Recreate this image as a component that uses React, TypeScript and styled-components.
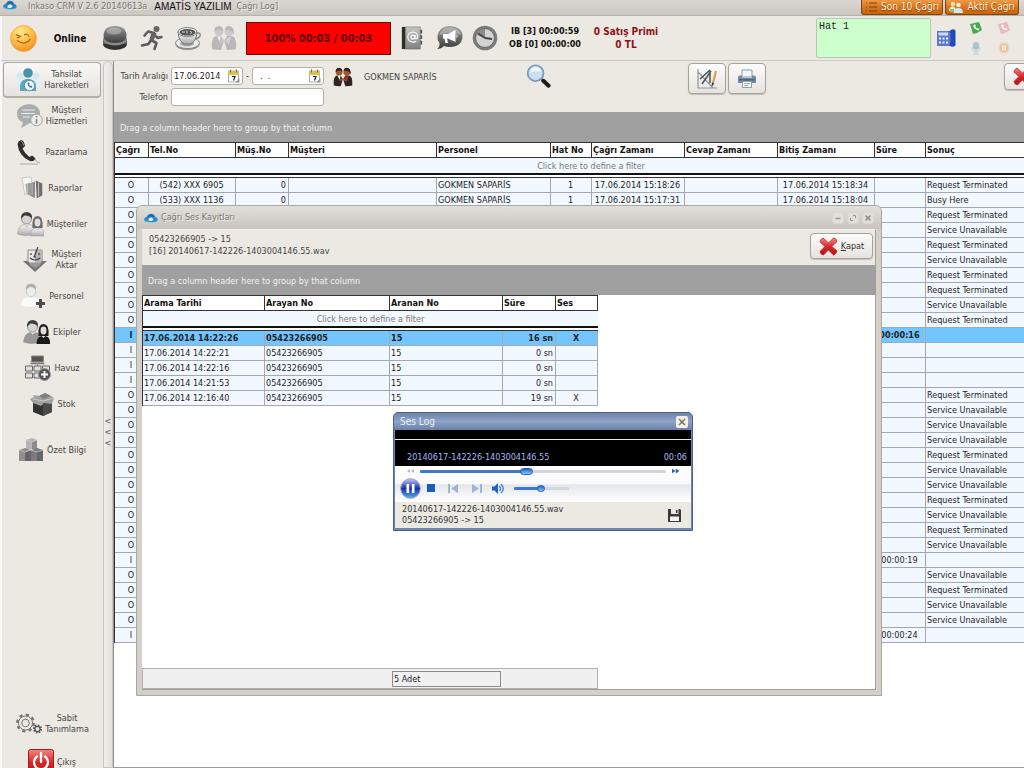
import React from "react";
import styled, { createGlobalStyle, css } from "styled-components";

const Global = createGlobalStyle`
  * { box-sizing: border-box; }
  html, body { margin: 0; padding: 0; }
  body, button, input, table {
    font-family: "DejaVu Sans Condensed", "DejaVu Sans", "Noto Sans", sans-serif;
    font-size: 9px;
    color: #222;
  }
  button, input, textarea { margin: 0; padding: 0; border: 0; background: none; outline: none; }
  svg { display: block; flex: none; }
`;

/* ---------- drawings ---------- */

const HiddenSvg = styled.svg`
  position: absolute;
`;
const Defs = () => (
  <HiddenSvg width="0" height="0" aria-hidden="true">
    <defs>
      <linearGradient id="gd" x1="0" y1="0" x2="0" y2="1">
        <stop offset="0" stopColor="#9a9a9a" />
        <stop offset="1" stopColor="#3c3c3c" />
      </linearGradient>
      <linearGradient id="gl" x1="0" y1="0" x2="0" y2="1">
        <stop offset="0" stopColor="#f6f6f6" />
        <stop offset="1" stopColor="#adadad" />
      </linearGradient>
      <linearGradient id="gm" x1="0" y1="0" x2="0" y2="1">
        <stop offset="0" stopColor="#c4c4c4" />
        <stop offset="1" stopColor="#808080" />
      </linearGradient>
      <radialGradient id="gs" cx="0.4" cy="0.25" r="0.8">
        <stop offset="0" stopColor="#ffe88a" />
        <stop offset="0.5" stopColor="#ffc04a" />
        <stop offset="1" stopColor="#f58a22" />
      </radialGradient>
      <linearGradient id="gr" x1="0" y1="0" x2="0" y2="1">
        <stop offset="0" stopColor="#f08a80" />
        <stop offset="0.5" stopColor="#d8292b" />
        <stop offset="1" stopColor="#b40f18" />
      </linearGradient>
      <linearGradient id="gb" x1="0" y1="0" x2="0" y2="1">
        <stop offset="0" stopColor="#c3cbf5" />
        <stop offset="0.5" stopColor="#1b2fae" />
        <stop offset="1" stopColor="#4fb2ff" />
      </linearGradient>
    </defs>
  </HiddenSvg>
);

type IconProps = { w?: number; h?: number; children: React.ReactNode; box?: string };
const Ico = ({ w = 26, h = 26, box = "0 0 26 26", children }: IconProps) => (
  <svg width={w} height={h} viewBox={box} aria-hidden="true">{children}</svg>
);

const CloudLogo = () => (
  <Ico w={14} h={10} box="0 0 14 10">
    <path d="M3 9Q0 8.500 .3 6Q1 3.800 3 3.800Q4 .5 7.500 .8Q10.500 1 11.200 4Q13.800 4.500 13.700 6.800Q13.200 9 11 9Z" fill="#2a86c6" />
    <path d="M3.500 4Q5 1 8 1.800Q10 2.500 10.500 4Q7 2.500 3.500 4Z" fill="#1a5f9b" />
    <path d="M4.300 7.500Q4.500 4.600 7.500 4.500Q9.300 5 9.500 7Q7 8.500 4.300 7.500Z" fill="#e9f4fb" />
    <path d="M1 7Q3 9 7 9Q11 9.400 13 7.500Q12 9.800 7 9.800Q2 9.800 1 7Z" fill="#5fd0e8" />
  </Ico>
);
const Smiley = () => (
  <Ico w={27} h={27}>
    <circle cx="13" cy="13" r="12.500" fill="url(#gs)" stroke="#f0a030" strokeWidth=".6" />
    <path d="M6 9.500L10 11L7 12.500M14 9.500Q17 7.500 18 11M7 15Q14 20.500 19.500 13.500" fill="none" stroke="#b5681a" strokeWidth="1.200" strokeLinecap="round" />
  </Ico>
);
const Buzzer = () => (
  <Ico>
    <ellipse cx="13" cy="19" rx="12" ry="6" fill="#333" />
    <path d="M1 14H25V19H1Z" fill="#555" />
    <ellipse cx="13" cy="14.500" rx="12" ry="6" fill="#8a8a8a" />
    <path d="M1.500 11Q1.500 1 13 1T24.500 11Q24 18 13 18T1.500 11Z" fill="url(#gd)" />
    <ellipse cx="12" cy="6" rx="7.500" ry="3.500" fill="#c5c5c5" opacity=".5" />
  </Ico>
);
const Runner = () => (
  <Ico>
    <circle cx="17.500" cy="4" r="3" fill="#666" />
    <path d="M15 8L9 6.500L5.500 10.500M15 8L12 15L17.500 18L15.500 24M12 15L9.500 19L3 20.500M15 9L18.500 13L22.500 12" fill="none" stroke="#5c5c5c" strokeWidth="2.600" strokeLinecap="round" strokeLinejoin="round" />
    <path d="M12.500 7.500L17.500 8L14.500 16L10.500 14.500Z" fill="#666" />
  </Ico>
);
const Coffee = () => (
  <Ico>
    <ellipse cx="12.500" cy="19.500" rx="12" ry="5.500" fill="#8f8f8f" />
    <ellipse cx="12.500" cy="18" rx="12" ry="5.500" fill="#ececec" stroke="#777" strokeWidth=".8" />
    <ellipse cx="12" cy="18.500" rx="7" ry="3" fill="#a5a5a5" />
    <path d="M3 7Q3.500 17 10 19H15Q21.500 17 22 7Z" fill="url(#gl)" stroke="#666" strokeWidth=".8" />
    <path d="M21.500 8Q26 7.500 25 11Q23.500 14 20 13.500" fill="none" stroke="#888" strokeWidth="1.500" />
    <ellipse cx="12.500" cy="7" rx="9.500" ry="4.500" fill="#eee" stroke="#666" strokeWidth=".8" />
    <ellipse cx="12.500" cy="7.300" rx="7.800" ry="3.300" fill="#555" />
    <path d="M7 7H10M12 5.500V8.500M15 6Q18 7 15.500 9" stroke="#ddd" fill="none" />
  </Ico>
);
const Talkers = ({ dark }: { dark?: boolean }) => {
  const a = dark ? "#2d2424" : "#b8b8b8";
  const b = dark ? "#a8542a" : "#cacaca";
  const c = dark ? "#c2282c" : "#d5d5d5";
  return (
    <Ico w={dark ? 22 : 26} h={dark ? 20 : 26}>
      <circle cx="8" cy="6.500" r="4.500" fill={b} />
      <path d="M3.500 7Q3 1 8 1Q12.500 1.500 12 6Q9 4 7 4.500Q5 5 3.500 7Z" fill={a} />
      <circle cx="18" cy="6.500" r="4.500" fill={b} />
      <path d="M14 5Q14 1 18 1Q23.500 1.500 23 10Q21 4 14 5Z" fill={a} />
      <path d="M1 24Q0 12 5 11H10Q12 14 12.500 17L10 25Q4 25 1 24ZM25 24Q26 12 21 11H16Q14 14 13.500 17L16 25Q22 25 25 24Z" fill={a} />
      <path d="M6 11.500L8.500 17L10 11Z" fill={dark ? "#fff" : "#e8e8e8"} />
      <path d="M15.500 13L17.500 20L20.500 11.500Z" fill={c} />
      <path d="M9 18Q13 13 17 18" stroke={b} strokeWidth="2" fill="none" />
    </Ico>
  );
};
const AddressBook = () => (
  <Ico w={24}>
    <path d="M2 1H6V25H2Z" fill="#2c2c2c" /><path d="M6 1H22V25H6Z" fill="url(#gm)" stroke="#6c6c6c" strokeWidth=".6" />
    <path d="M22 4H24V8H22ZM22 10H24V14H22ZM22 16H24V20H22Z" fill="#555" />
    <circle cx="14" cy="12" r="2.200" fill="none" stroke="#fff" strokeWidth="1.300" />
    <path d="M16.200 9.800V13.200Q17.500 15 18.800 13.200Q20 7 14 6.500Q8.500 7 8.500 12T14 17.500Q16 17.500 17.500 16.500" fill="none" stroke="#fff" strokeWidth="1.200" />
  </Ico>
);
const Megaphone = () => (
  <Ico w={28} box="0 0 26 26">
    <path d="M13 1Q25.500 2 25.500 11.500Q25 21.500 13 22Q9 22 7 21Q4 24.500 0 24Q3 22 2.500 18Q0 15 .5 11Q2 1.500 13 1Z" fill="url(#gd)" />
    <path d="M13 2Q23.500 3 24 10Q13 6 2 10.500Q4 2.500 13 2Z" fill="#bbb" opacity=".7" />
    <path d="M6 9H11L18.500 5V17L11 13.500H10L11 18H8.500L7.500 13.500H6Z" fill="#fff" /><path d="M19.500 9Q21.500 11 19.500 13.500Z" fill="#fff" />
  </Ico>
);
const Clock = () => (
  <Ico>
    <circle cx="13" cy="13" r="12.300" fill="#7c7c7c" /><circle cx="13" cy="13" r="9.500" fill="#d2d2d2" stroke="#666" />
    <path d="M13 13L4.500 9.500Q7 4 13 4Z" fill="#8b8b8b" /><path d="M13 13L6 8.500M13 13L20 14" stroke="#444" strokeWidth="1.800" />
  </Ico>
);
const Phone = () => (
  <Ico w={20} h={20} box="0 0 20 20">
    <path d="M1 3H15V18H1Z" fill="#5b7ad0" /><path d="M2.500 4.500H12V7.500H2.500Z" fill="#cfdcfb" />
    <path d="M3 9.500H5V11.500H3ZM6.500 9.500H8.500V11.500H6.500ZM10 9.500H12V11.500H10ZM3 13.500H5V15.500H3ZM6.500 13.500H8.500V15.500H6.500ZM10 13.500H12V15.500H10Z" fill="#e6edff" />
    <path d="M13.500 3Q17 0 19.500 2.500V17.500Q16.500 20 13.500 17.500Q15 15 14.500 10Q15 6 13.500 3Z" fill="#2648b4" />
  </Ico>
);
const CallGlyph = ({ color }: { color: string }) => (
  <Ico w={14} h={14} box="0 0 14 14">
    <path d="M1 3L10 1L13 9L8 12L4 13Z" fill={color} />
    <path d="M4 4.500Q5 8.500 9.500 9.500L10.500 8L8.500 7L8 7.700Q6.500 7 6.300 5.600L7 5L6 3.200Z" fill="#fff" />
  </Ico>
);
const Mic = () => (
  <Ico w={14} h={14} box="0 0 14 14">
    <rect x="4" y="1" width="6" height="8" rx="3" fill="#a9c3cf" />
    <path d="M3 6Q3 10.500 7 10.500T11 6M7 10.500V13M4 13H10" stroke="#b8ccd4" fill="none" />
  </Ico>
);
const HoldDot = () => (
  <Ico w={14} h={14} box="0 0 14 14">
    <circle cx="7" cy="7" r="6.500" fill="#f2dccb" /><circle cx="7" cy="7" r="4.500" fill="#ecc09c" />
    <path d="M5.700 4.500V9.500M8.300 4.500V9.500" stroke="#fff" strokeWidth="1.400" />
  </Ico>
);
const ListGlyph = () => (
  <Ico w={12} h={12} box="0 0 12 12"><path d="M4 2H12M4 6H12M4 10H12M1 2H2M1 6H2M1 10H2" stroke="#7c4310" /></Ico>
);
const UsersGlyph = () => (
  <Ico w={14} h={12} box="0 0 14 12">
    <circle cx="4" cy="3" r="2.300" fill="#f4dca0" /><path d="M0 9Q1 5 4 5.500Q7 6 7 10H0Z" fill="#f0e9e2" />
    <circle cx="9.500" cy="4" r="2.300" fill="#fff0d8" /><path d="M4.500 12Q5 7 9.500 7T14 12Z" fill="#cfe6ee" />
    <path d="M1 8H5V11H1Z" fill="#8fbf70" />
  </Ico>
);
const CalendarGlyph = () => (
  <Ico w={14} h={14} box="0 0 14 14">
    <rect x="1.500" y="2" width="10" height="11" fill="#fff" stroke="#999" strokeWidth=".8" />
    <path d="M1 2H12V6H1Z" fill="#dfbd4e" /><path d="M3.500 .5V3.500M9.500 .5V3.500" stroke="#7d6a28" />
    <path d="M5 7.500H8L6.500 11.500" fill="none" stroke="#222" strokeWidth="1.200" /><path d="M12.500 8.500V13.500H8.500Z" fill="#999" />
  </Ico>
);
const Magnifier = () => (
  <Ico w={25} h={25}>
    <path d="M15.500 15.500L19 18" stroke="#888" strokeWidth="2.500" />
    <path d="M18 17.500L23.500 22.500" stroke="#1b1b1b" strokeWidth="4.200" strokeLinecap="round" />
    <circle cx="10" cy="9.500" r="8.200" fill="#c9dff5" stroke="#7f98b5" strokeWidth="1.800" />
    <path d="M4 9Q5 3.500 11 3.500Q15 5 15.500 8Q10 7 4 9Z" fill="#f4faff" />
  </Ico>
);
const DesignGlyph = () => (
  <Ico w={22} h={22} box="0 0 22 22">
    <path d="M2 1V20H21M2 4L17 20" fill="none" stroke="#8d979f" strokeWidth="1.200" />
    <path d="M4 11L14 2M6 16L15 3M14 3V15" stroke="#4a5259" strokeWidth="1.500" fill="none" />
    <path d="M20 3L17 15" stroke="#dca04a" strokeWidth="2.200" /><path d="M16 14.500L15.500 19L18.200 15.500Z" fill="#333" />
  </Ico>
);
const PrinterGlyph = () => (
  <Ico w={20} h={20} box="0 0 20 20">
    <path d="M5 1H15V8H5Z" fill="#f4f8fb" stroke="#8a9caa" />
    <path d="M1 8.500Q1 6.500 3 6.500H5V9H15V6.500H17Q19 6.500 19 8.500V14H1Z" fill="#6d8ca3" /><path d="M2 10H18V11.500H2Z" fill="#45667d" />
    <path d="M5.500 12.500H14.500V18.500H5.500Z" fill="#fff" stroke="#8a9caa" /><path d="M7 14.500H13M7 16.500H11" stroke="#aaa" />
  </Ico>
);
const RedCross = () => (
  <Ico w={19} h={19} box="0 0 19 19">
    <path d="M4 1L9.500 6L14.500 1Q17 1 18 4.500L12.800 9.500L18 14Q17 17.500 14.500 18L9.300 13L4.500 18Q1.500 17.500 1 14.500L6 9.500L1 5Q1.500 2 4 1Z" fill="url(#gr)" stroke="#b32a2e" strokeWidth=".8" />
  </Ico>
);
const Care = () => (
  <Ico w={26}>
    <circle cx="5" cy="9" r="3.500" fill="#d3e9f2" /><circle cx="21" cy="9" r="3.500" fill="#d3e9f2" /><path d="M0 20Q1 13 6 13H20Q25 13 26 20Z" fill="#deeef5" />
    <circle cx="13" cy="6" r="4.800" fill="#4993ae" /><path d="M5 24Q4 13 11 12H15Q22 13 21 24Z" fill="#5ba6c0" />
    <circle cx="14.500" cy="18.500" r="5.200" fill="#f5fbfd" stroke="#4c90aa" /><path d="M12.500 16Q12.500 20 16.500 21L17.500 19.500L16 18.500L15.500 19Q14.500 18.500 14.200 17.500L14.800 16.800L13.800 15.500Z" fill="#3b7d97" />
  </Ico>
);
const Speech = () => (
  <Ico>
    <path d="M12 1Q23 2 23 10.500Q22 19 13 20L4 25L6 19.500Q0 17 0 10.500Q.5 2 12 1Z" fill="#a9adad" />
    <path d="M5 7H18M4 10.500H18M6 14H13" stroke="#e9ebeb" strokeWidth="1.200" />
    <circle cx="19.500" cy="17" r="5.800" fill="#ececec" stroke="#9ea4a4" /><path d="M19.500 16V20.500M19.500 13V14.500" stroke="#888" strokeWidth="1.700" />
  </Ico>
);
const Handset = () => (
  <Ico>
    <path d="M5 1Q8 1 9 7L6.500 9.500Q9 15 13.500 18L16 16.500Q19 18 19.500 20Q17 23.500 13 21.500Q3 17 1.500 5Q2 2 5 1Z" fill="#2f2f2f" />
    <path d="M5 2Q7 3 7.500 6.500" stroke="#999" fill="none" /><path d="M4 25H22M19 20Q20 23 24 24" stroke="#aaa" fill="none" />
  </Ico>
);
const Reports = () => (
  <Ico w={24}>
    <path d="M1 2L11 1L13 19L4 20Z" fill="#f4f4f4" stroke="#c5c5c5" /><path d="M5 9L10 7V21L6 19Z" fill="#9b9b9b" />
    <path d="M10 8L15 6V24L10 21Z" fill="#848484" /><path d="M16 5L23 8V21L17 24Z" fill="#6d6d6d" /><path d="M12 8V21M19 7V22M7 9V19" stroke="#ccc" />
  </Ico>
);
const Couple = ({ dark }: { dark?: boolean }) => (
  <Ico w={27}>
    <circle cx="9" cy="8" r="5" fill="#d5d5d5" stroke="#777" strokeWidth=".7" /><path d="M3.500 8Q3 1 9.500 1Q15.500 2 14.500 8Q13 4.500 7 4.500Q5 6 3.500 8Z" fill="#3c3c3c" />
    <path d="M0 23Q1 14 7 13.500L9 16L12 13.500Q17 14 17 23Q8 26 0 23Z" fill={dark ? "#989898" : "url(#gl)"} stroke="#888" strokeWidth=".5" />
    <path d="M15 17Q14 5 20 5T25 17Z" fill={dark ? "#1f1f1f" : "#6a6a6a"} /><ellipse cx="20" cy="11.500" rx="3" ry="4" fill="#ddd" />
    <path d="M13 25Q13 18 18 17L20 19L22 17Q27 18 26.500 25Z" fill={dark ? "#191919" : "url(#gl)"} stroke={dark ? "none" : "#999"} strokeWidth=".5" />
  </Ico>
);
const Transfer = () => (
  <Ico>
    <path d="M6 3H20V16H6Z" fill="#e8e8e8" stroke="#888" /><path d="M13 3H20V16H13Z" fill="#b5b5b5" />
    <path d="M1 14H6L8 17H18L20 14H25L13 25Z" fill="#777" /><path d="M8 16H18V18L13 21L8 18Z" fill="#999" />
    <path d="M9 6V8M17 6V8M8 11Q13 15 18 11M16 0L12 10H14" stroke="#333" fill="none" strokeWidth="1.100" />
  </Ico>
);
const PersonAdd = () => (
  <Ico>
    <path d="M0 23Q1 15 7 14L9 12H13L15 14Q21 15 20 23Q10 26 0 23Z" fill="#fafafa" stroke="#ddd" strokeWidth=".6" />
    <ellipse cx="11" cy="7.500" rx="4.800" ry="6.500" fill="#ededed" stroke="#bbb" strokeWidth=".7" /><path d="M6 7Q5 1 11 .7Q17 1 16 7Q14 4 11 4T6 7Z" fill="#aeaeae" />
    <path d="M20.500 16V25M16 20.500H25" stroke="#4b4b4b" strokeWidth="3" />
  </Ico>
);
const Pool = () => (
  <Ico w={27}>
    <path d="M7 1H19V7H7Z" fill="#555" stroke="#888" /><path d="M6 8.500H20" stroke="#777" strokeWidth="1.500" /><path d="M13 8V12" stroke="#999" fill="none" />
    <path d="M1 11H8V16H1ZM9.500 11H16.500V16H9.500ZM18 11H25V16H18ZM1 18H8V23H1ZM9.500 18H16.500V23H9.500Z" fill="#dedede" stroke="#666" />
    <circle cx="20" cy="19.500" r="6" fill="#555" stroke="#999" /><path d="M20 16V23M16.500 19.500H23.500" stroke="#fff" strokeWidth="2" />
  </Ico>
);
const OpenBox = () => (
  <Ico>
    <path d="M4 11H23V21L14 25L4 21Z" fill="#333" /><path d="M14 13L23 11V21L14 25Z" fill="#4a4a4a" />
    <path d="M4 4L10 5L16 2L22 5L25 7L23 13L15 12L12 15L4 12L1 8L5 6Z" fill="#a0a0a0" /><path d="M10 5L16 2L22 5L15 8Z" fill="#7f7f7f" /><path d="M4 8L14 10L25 7" stroke="#c8c8c8" fill="none" />
  </Ico>
);
const Cubes = () => (
  <Ico>
    <path d="M8 3L14 1L19 3V12H8Z" fill="#b4b4b4" /><path d="M14 5L19 3V12H14Z" fill="#8b8b8b" />
    <path d="M1 13L7 11L13 13V24H1Z" fill="#909090" /><path d="M13 13L19 11L25 13V24H13Z" fill="#7c7c7c" />
    <path d="M7 15L13 13V24H7ZM19 15L25 13V24H19Z" fill="#666" /><path d="M1 13L7 15L13 13L19 15L25 13M8 3L14 5L19 3" stroke="#ccc" fill="none" strokeWidth=".7" />
  </Ico>
);
const Gears = () => (
  <Ico w={27}>
    <circle cx="10" cy="12" r="8" fill="none" stroke="#777" strokeWidth="3" strokeDasharray="3.140 3.140" />
    <circle cx="10" cy="12" r="7" fill="#ece9e3" stroke="#777" /><circle cx="10" cy="12" r="3.800" fill="none" stroke="#777" />
    <circle cx="22" cy="18" r="3.600" fill="none" stroke="#555" strokeWidth="2" strokeDasharray="1.400 1.400" /><circle cx="22" cy="18" r="2.600" fill="none" stroke="#555" strokeWidth="1.300" />
  </Ico>
);
const Power = () => (
  <Ico>
    <rect x=".5" y=".5" width="25" height="25" rx="2" fill="url(#gr)" stroke="#a51a20" />
    <path d="M9 7.500A7 7 0 1 0 17 7.500M13 4V13" stroke="#fff" strokeWidth="2.300" fill="none" strokeLinecap="round" />
  </Ico>
);
const Floppy = () => (
  <Ico w={15} h={15} box="0 0 15 15">
    <path d="M1 1H13L14 2V14H1Z" fill="#3a3a3a" /><path d="M4 1H11.500V6H4Z" fill="#e9e9e6" /><path d="M9 2H10.500V5H9Z" fill="#333" /><path d="M3 8.500H12V13H3Z" fill="#f5f5f2" />
  </Ico>
);

/* ---------- page frame ---------- */

const Screen = styled.div`
  position: relative;
  height: 100vh;
  display: flex;
  flex-direction: column;
  overflow: hidden;
  background: #ece9e3;
`;
const TitleBar = styled.header`
  height: 16px;
  flex: none;
  display: flex;
  align-items: flex-start;
  padding: 0 5px 0 3px;
  background: linear-gradient(#dbd7d2, #cbc6bf);
  border-bottom: 1px solid #b5b1aa;
`;
const TitleText = styled.span`
  color: #77736e;
  font-size: 9px;
  line-height: 13px;
  text-shadow: 1px 1px 0 #f2f0ed;
  white-space: nowrap;
`;
const Company = styled.strong`
  margin: 0 5px 0 7px;
  font: 10px/13px "Liberation Sans", Arial, sans-serif;
  color: #111;
`;
const TitleGap = styled.span<{ $w?: number }>`
  ${(p) => (p.$w ? `width: ${p.$w}px;` : "flex: 1;")}
`;
const OrangeButton = styled.button<{ $w: number }>`
  width: ${(p) => p.$w}px;
  height: 15px;
  margin-left: 2px;
  display: flex;
  align-items: center;
  justify-content: center;
  gap: 4px;
  background: linear-gradient(#ee9a44, #d4711a 60%, #c96510);
  border: 1px solid #7c4512;
  border-top: 0;
  border-radius: 0 0 3px 3px;
  color: #fff3df;
  font-size: 10px;
  line-height: 12px;
  text-shadow: 0 1px 1px #7a3c08;
  white-space: nowrap;
`;

const Toolbar = styled.div`
  height: 45px;
  flex: none;
  display: flex;
  align-items: center;
  border-left: 2px solid #fbfaf8;
  border-bottom: 1px solid #cdc9c2;
  padding: 0 12px 0 0;
`;
const Cell = styled.div<{ $w: number }>`
  width: ${(p) => p.$w}px;
  flex: none;
  display: flex;
  justify-content: center;
`;
const ToolButton = styled.button<{ $w: number }>`
  width: ${(p) => p.$w}px;
  flex: none;
  display: flex;
  justify-content: center;
`;
const Online = styled.strong`
  font-size: 10px;
  color: #111;
`;
const Counter = styled.div`
  width: 145px;
  height: 33px;
  flex: none;
  margin-left: 4px;
  display: flex;
  align-items: center;
  justify-content: center;
  background: #fd0000;
  border: 1px solid #5c1010;
  color: #5a0000;
  font-size: 11px;
  font-weight: bold;
`;
const Stats = styled.div<{ $w: number; $red?: boolean }>`
  width: ${(p) => p.$w}px;
  flex: none;
  text-align: center;
  font-weight: bold;
  font-size: ${(p) => (p.$red ? 10 : 9)}px;
  line-height: 13px;
  white-space: nowrap;
  color: ${(p) => (p.$red ? "#8e1218" : "#111")};
`;
const Line = styled.textarea`
  width: 115px;
  height: 40px;
  flex: none;
  margin-left: auto;
  padding: 2px;
  resize: none;
  background: #ccffcc;
  border: 1px solid #b5c8b3;
  border-radius: 2px;
  font: 10px/12px "Liberation Mono", "Courier New", monospace;
  color: #222;
`;
const CallGrid = styled.div`
  display: grid;
  grid-template-columns: 28px 28px;
  grid-template-rows: 20px 20px;
  place-items: center;
  margin-left: 1px;
  margin-right: -6px;
`;

const Body = styled.div`
  flex: 1;
  min-height: 0;
  display: flex;
  border-left: 2px solid #fbfaf8;
`;
const Sidebar = styled.nav`
  width: 101px;
  flex: none;
  display: flex;
  flex-direction: column;
  padding: 1px 2px 0 1px;
  overflow: hidden;
`;
const NavItem = styled.button<{ $active?: boolean; $gap?: boolean; $push?: boolean }>`
  height: 36px;
  flex: none;
  display: flex;
  align-items: center;
  justify-content: center;
  gap: 3px;
  border: 1px solid transparent;
  border-radius: 4px;
  color: #46423e;
  font-size: 9px;
  line-height: 11px;
  text-align: center;
  white-space: pre-line;
  ${(p) => p.$gap && "margin-top: 10px;"}
  ${(p) => p.$push && "margin-top: auto;"}
  ${(p) => p.$active && css`
    background: linear-gradient(#f8f7f6, #e6e3de);
    border: 1px solid #aaa6a0;
    border-bottom: 2px solid #b2aea8;
  `}
  &:last-child { margin: 2px 0 -12px; }
`;
const Splitter = styled.button`
  width: 10px;
  flex: none;
  display: flex;
  flex-direction: column;
  align-items: center;
  justify-content: center;
  padding-top: 36px;
  background: linear-gradient(90deg, #f1efeb, #e2dfda);
  border: 1px solid #c9c5bf;
  border-radius: 5px 5px 0 0;
  color: #555;
  font-size: 9px;
  line-height: 11px;
`;
const Main = styled.main`
  flex: 1;
  min-width: 0;
  display: flex;
  flex-direction: column;
  background: #fff;
  border-left: 1px solid #8f8f8f;
  border-bottom: 1px solid #9c9c9c;
  overflow: hidden;
`;
const FilterBar = styled.form`
  height: 51px;
  flex: none;
  display: flex;
  align-items: flex-start;
  background: #ece9e3;
  padding-top: 2px;
`;
const Fields = styled.div`
  display: grid;
  grid-template-columns: 54px 153px;
  column-gap: 3px;
  row-gap: 3px;
  padding-top: 4px;
  align-items: center;
`;
const FieldLabel = styled.label`
  text-align: right;
  color: #444;
  white-space: nowrap;
`;
const DateRange = styled.div`
  display: flex;
  justify-content: space-between;
  align-items: center;
`;
const fieldBox = css`
  height: 18px;
  background: #fff;
  border: 1px solid #b3afa9;
  border-radius: 3px;
`;
const DateBox = styled.span`
  ${fieldBox}
  width: 72px;
  display: flex;
  align-items: center;
  padding: 0 2px;
`;
const DateInput = styled.input`
  width: 53px;
  white-space: pre;
`;
const TextInput = styled.input`
  ${fieldBox}
  width: 100%;
`;
const Agent = styled.div`
  width: 194px;
  height: 28px;
  flex: none;
  margin-left: 8px;
  display: flex;
  align-items: center;
  gap: 10px;
  color: #444;
`;
const FlatButton = styled.button`
  height: 26px;
  flex: none;
`;
const raised = css`
  background: linear-gradient(#fcfcfb, #e6e3df);
  border: 1px solid #a5a19b;
  border-radius: 4px;
  box-shadow: 0 1px 1px #c2beb7;
  display: flex;
  align-items: center;
  justify-content: center;
`;
const SquareButton = styled.button`
  ${raised}
  width: 38px;
  height: 31px;
  flex: none;
  margin-right: 2px;
`;
const ButtonPair = styled.div`
  display: flex;
  margin-left: 137px;
`;
const CloseButton = styled.button`
  ${raised}
  width: 40px;
  height: 27px;
  flex: none;
  margin-left: auto;
  margin-right: -20px;
  justify-content: flex-start;
  padding-left: 8px;
`;

/* ---------- grids ---------- */

const GroupBar = styled.div`
  height: 30px;
  flex: none;
  padding: 0 6px;
  background: #a0a0a0;
  color: #f1f1f1;
  line-height: 32px;
`;
const Grid = styled.table<{ $w: number; $fill?: boolean }>`
  width: ${(p) => p.$w}px;
  ${(p) => p.$fill && "min-width: 100%;"}
  table-layout: fixed;
  border-collapse: separate;
  border-spacing: 0;
  border-left: 1px solid #333;
  line-height: 14px;
`;
const Th = styled.th`
  height: 16px;
  padding: 0 2px 0 1px;
  text-align: left;
  font-weight: bold;
  color: #111;
  background: #fff;
  border: 1px solid #333;
  border-left: 0;
  white-space: nowrap;
  overflow: hidden;
`;
const FilterCell = styled.td`
  height: 15px;
  padding: 0;
  text-align: center;
  background: #f2f8ff;
  color: #777;
`;
const RuleCell = styled.td`
  height: 5px;
  padding: 0;
  line-height: 0;
  background: #fff;
  border-top: 2px solid #111;
  border-bottom: 1px solid #333;
`;
const Td = styled.td<{ $a?: "center" | "right" }>`
  height: 15px;
  padding: 0 2px 0 1px;
  text-align: ${(p) => p.$a || "left"};
  border-right: 1px solid #a3a9ae;
  border-bottom: 1px solid #a3a9ae;
  white-space: nowrap;
  overflow: hidden;
`;
const Row = styled.tr<{ $sel?: boolean }>`
  background: ${(p) => (p.$sel ? "#73c5fd" : "#f2f8ff")};
  font-weight: ${(p) => (p.$sel ? "bold" : "normal")};
`;

/* ---------- dialog ---------- */

const Dialog = styled.section`
  position: absolute;
  left: 136px;
  top: 205px;
  width: 746px;
  height: 491px;
  display: flex;
  flex-direction: column;
  padding: 0 5px 5px;
  background: #d3cfc9;
  border: 1px solid #aba79f;
  border-radius: 6px 6px 0 0;
`;
const DialogTitle = styled.header`
  height: 23px;
  flex: none;
  margin: 0 -5px;
  padding: 0 7px;
  display: flex;
  align-items: center;
  gap: 3px;
  border-radius: 5px 5px 0 0;
  background: linear-gradient(#e2dfdb, #c8c3bc);
`;
const WinButton = styled.button`
  width: 12px;
  height: 12px;
  display: grid;
  place-items: center;
  background: #e2dfda;
  border: 1px solid #d9d5cf;
  border-radius: 3px;
`;
const DialogBody = styled.div`
  flex: 1;
  min-height: 0;
  display: flex;
  flex-direction: column;
  background: #fff;
  border: 1px solid #a29f97;
  border-left: 0;
  border-top-color: #f4f2ee;
`;
const DialogHead = styled.div`
  height: 35px;
  flex: none;
  display: flex;
  justify-content: space-between;
  padding: 3px 2px 0 7px;
  background: #ece9e3;
  color: #444;
  line-height: 12px;
`;
const DialogInfo = styled.p`
  margin: 0;
  white-space: pre-line;
`;
const Kapat = styled.button`
  ${raised}
  width: 63px;
  height: 26px;
  gap: 3px;
  color: #333;
`;
const Summary = styled.footer`
  width: 456px;
  height: 21px;
  margin-top: auto;
  padding: 2px 0 0 249px;
  background: #f0f0f0;
  border: 1px solid #b0b0b0;
`;
const SummaryBox = styled.output`
  display: block;
  width: 109px;
  height: 16px;
  padding-left: 1px;
  border: 1px solid #8c8c8c;
  line-height: 14px;
`;

/* ---------- audio player ---------- */

const Player = styled.section`
  position: absolute;
  left: 393px;
  top: 412px;
  width: 300px;
  height: 119px;
  display: flex;
  flex-direction: column;
  padding: 0 1px 2px;
  background: #6f86ae;
  border: 1px solid #4c5f85;
  border-radius: 5px 5px 0 0;
`;
const PlayerTitle = styled.header`
  height: 17px;
  flex: none;
  margin: 0 -1px;
  padding: 0 4px 0 6px;
  display: flex;
  justify-content: space-between;
  align-items: center;
  border-radius: 4px 4px 0 0;
  background: linear-gradient(#6f84ab, #8fa3c6 50%, #6a80a8);
  color: #eef2fa;
  font-size: 10px;
`;
const PlayerClose = styled.button`
  width: 12px;
  height: 12px;
  display: grid;
  place-items: center;
  background: #f2f1e8;
  border-radius: 2px;
`;
const Display = styled.div`
  height: 36px;
  flex: none;
  display: flex;
  flex-direction: column;
  background: #000;
  color: #a9b3f5;
`;
const Scope = styled.div`
  height: 10px;
  border-bottom: 1px solid #e8e8e8;
`;
const Track = styled.div`
  flex: 1;
  display: flex;
  justify-content: space-between;
  padding: 11px 4px 0 12px;
  line-height: 13px;
`;
const Controls = styled.div`
  height: 36px;
  flex: none;
  background: linear-gradient(#fff 0, #fafafb 50%, #e4e6ea 52%, #fff);
`;
const SeekRow = styled.div`
  height: 10px;
  display: flex;
  align-items: center;
  justify-content: space-between;
  padding: 0 11px;
`;
const ButtonRow = styled.div`
  display: flex;
  align-items: center;
  height: 24px;
  padding-left: 4px;
`;
const IconButton = styled.button<{ $w: number }>`
  width: ${(p) => p.$w}px;
  display: grid;
  place-items: center;
`;
const Range = styled.input<{ $w: number; $thumb: number; $pct: number }>`
  appearance: none;
  width: ${(p) => p.$w}px;
  height: 8px;
  &::-webkit-slider-runnable-track {
    height: 3px;
    border-radius: 1px;
    background: linear-gradient(90deg, #3b79d2 ${(p) => p.$pct}%, #d3d6da ${(p) => p.$pct}%);
  }
  &::-webkit-slider-thumb {
    appearance: none;
    width: ${(p) => p.$thumb}px;
    height: 7px;
    margin-top: -2px;
    border: 1px solid #1f5cb8;
    border-radius: 4px;
    background: linear-gradient(#1b63ce, #8fc4ff);
  }
`;
const PlayerFoot = styled.footer`
  flex: 1;
  display: flex;
  align-items: center;
  justify-content: space-between;
  padding: 0 9px 0 7px;
  background: #ece9e3;
  color: #333;
  line-height: 11px;
  white-space: pre-line;
`;

/* ---------- data ---------- */

const navItems: { label: string; icon: React.ReactNode; active?: boolean; gap?: boolean; push?: boolean }[] = [
  { label: "Tahsilat\nHareketleri", icon: <Care />, active: true },
  { label: "Müşteri\nHizmetleri", icon: <Speech /> },
  { label: "Pazarlama", icon: <Handset /> },
  { label: "Raporlar", icon: <Reports /> },
  { label: "Müşteriler", icon: <Couple /> },
  { label: "Müşteri\nAktar", icon: <Transfer /> },
  { label: "Personel", icon: <PersonAdd /> },
  { label: "Ekipler", icon: <Couple dark /> },
  { label: "Havuz", icon: <Pool /> },
  { label: "Stok", icon: <OpenBox /> },
  { label: "Özet Bilgi", icon: <Cubes />, gap: true },
  { label: "Sabit\nTanımlama", icon: <Gears />, push: true },
  { label: "Çıkış", icon: <Power /> },
];

const RT = "Request Terminated";
const SU = "Service Unavailable";
type Call = { dir: string; tel?: string; no?: string; agent?: string; line?: string; start?: string; end?: string; dur?: string; result?: string };
const out = (result: string): Call => ({ dir: "O", result });
const calls: Call[] = [
  { dir: "O", tel: "(542) XXX 6905", no: "0", agent: "GOKMEN SAPARİS", line: "1", start: "17.06.2014 15:18:26", end: "17.06.2014 15:18:34", result: RT },
  { dir: "O", tel: "(533) XXX 1136", no: "0", agent: "GOKMEN SAPARİS", line: "1", start: "17.06.2014 15:17:31", end: "17.06.2014 15:18:04", result: "Busy Here" },
  ...[RT, SU, RT, SU, RT, RT, SU, RT].map(out),
  { dir: "I", dur: "00:00:16" },
  { dir: "I" }, { dir: "I" }, { dir: "I" },
  ...[RT, SU, SU, SU, RT, SU, SU, RT, SU, RT, SU].map(out),
  { dir: "I", dur: "00:00:19" },
  ...[SU, RT, SU, SU].map(out),
  { dir: "I", dur: "00:00:24" },
];
const callCols: [string, number][] = [
  ["Çağrı", 34], ["Tel.No", 87], ["Müş.No", 53], ["Müşteri", 148], ["Personel", 114], ["Hat No", 41],
  ["Çağrı Zamanı", 93], ["Cevap Zamanı", 93], ["Bitiş Zamanı", 97], ["Süre", 51], ["Sonuç", 141],
];
const recordings = [
  ["17.06.2014 14:22:26", "16 sn", "X"],
  ["17.06.2014 14:22:21", "0 sn", ""],
  ["17.06.2014 14:22:16", "0 sn", ""],
  ["17.06.2014 14:21:53", "0 sn", ""],
  ["17.06.2014 12:16:40", "19 sn", "X"],
];
const recCols: [string, number][] = [["Arama Tarihi", 122], ["Arayan No", 125], ["Aranan No", 113], ["Süre", 53], ["Ses", 42]];

const GridHead = ({ cols }: { cols: [string, number][] }) => (
  <>
    <colgroup>{cols.map(([n, w]) => <col key={n} width={w} />)}</colgroup>
    <thead>
      <tr>{cols.map(([n]) => <Th key={n} scope="col">{n}</Th>)}</tr>
      <tr><FilterCell colSpan={cols.length}>Click here to define a filter</FilterCell></tr>
      <tr><RuleCell colSpan={cols.length} /></tr>
    </thead>
  </>
);

const noop = () => {};

export default function App() {
  return (
    <Screen>
      <Global />
      <Defs />
      <TitleBar>
        <CloudLogo />
        <TitleGap $w={11} />
        <TitleText>Inkaso CRM V 2.6 20140613a</TitleText>
        <Company>AMATİS YAZILIM</Company>
        <TitleText>Çağrı Log]</TitleText>
        <TitleGap />
        <OrangeButton $w={82}><ListGlyph />Son 10 Çağrı</OrangeButton>
        <OrangeButton $w={74}><UsersGlyph />Aktif Çağrı</OrangeButton>
      </TitleBar>

      <Toolbar>
        <Cell $w={42}><Smiley /></Cell>
        <Cell $w={52}><Online>Online</Online></Cell>
        <ToolButton $w={38} aria-label="Alarm"><Buzzer /></ToolButton>
        <ToolButton $w={36} aria-label="Mola"><Runner /></ToolButton>
        <ToolButton $w={36} aria-label="Kahve"><Coffee /></ToolButton>
        <ToolButton $w={36} aria-label="Toplantı"><Talkers /></ToolButton>
        <Counter>100% 00:03 / 00:03</Counter>
        <ToolButton $w={42} aria-label="Rehber"><AddressBook /></ToolButton>
        <ToolButton $w={34} aria-label="Duyuru"><Megaphone /></ToolButton>
        <ToolButton $w={36} aria-label="Saat"><Clock /></ToolButton>
        <Stats $w={84}>IB [3] 00:00:59<br />OB [0] 00:00:00</Stats>
        <Stats $w={78} $red>0 Satış Primi<br />0 TL</Stats>
        <Line aria-label="Hat" readOnly value="Hat 1" />
        <ToolButton $w={30} aria-label="Telefon"><Phone /></ToolButton>
        <CallGrid>
          <CallGlyph color="#42ad4a" />
          <CallGlyph color="#edb6bd" />
          <Mic />
          <HoldDot />
        </CallGrid>
      </Toolbar>

      <Body>
        <Sidebar>
          {navItems.map((n) => (
            <NavItem key={n.label} $active={n.active} $gap={n.gap} $push={n.push}>
              {n.icon}<span>{n.label}</span>
            </NavItem>
          ))}
        </Sidebar>
        <Splitter aria-label="Menüyü daralt"><span>&lt;</span><span>&lt;</span><span>&lt;</span></Splitter>
        <Main>
          <FilterBar onSubmit={(e) => e.preventDefault()}>
            <Fields>
              <FieldLabel htmlFor="from">Tarih Aralığı</FieldLabel>
              <DateRange>
                <DateBox><DateInput id="from" value="17.06.2014" onChange={noop} /><button type="button" aria-label="Takvim"><CalendarGlyph /></button></DateBox>
                -
                <DateBox><DateInput aria-label="Bitiş" value="  .  ." onChange={noop} /><button type="button" aria-label="Takvim"><CalendarGlyph /></button></DateBox>
              </DateRange>
              <FieldLabel htmlFor="tel">Telefon</FieldLabel>
              <TextInput id="tel" />
            </Fields>
            <Agent><Talkers dark />GOKMEN SAPARİS</Agent>
            <FlatButton type="button" aria-label="Ara"><Magnifier /></FlatButton>
            <ButtonPair>
              <SquareButton type="button" aria-label="Tasarım"><DesignGlyph /></SquareButton>
              <SquareButton type="button" aria-label="Yazdır"><PrinterGlyph /></SquareButton>
            </ButtonPair>
            <CloseButton type="button" aria-label="Kapat"><RedCross /></CloseButton>
          </FilterBar>
          <GroupBar>Drag a column header here to group by that column</GroupBar>
          <Grid $w={952} $fill>
            <GridHead cols={callCols} />
            <tbody>
              {calls.map((c, i) => (
                <Row key={i} $sel={i === 10}>
                  <Td $a="center">{c.dir}</Td>
                  <Td $a="center">{c.tel}</Td>
                  <Td $a="right">{c.no}</Td>
                  <Td />
                  <Td>{c.agent}</Td>
                  <Td $a="center">{c.line}</Td>
                  <Td $a="center">{c.start}</Td>
                  <Td />
                  <Td $a="center">{c.end}</Td>
                  <Td $a="center">{c.dur}</Td>
                  <Td>{c.result}</Td>
                </Row>
              ))}
            </tbody>
          </Grid>
        </Main>
      </Body>

      <Dialog role="dialog" aria-label="Çağrı Ses Kayıtları">
        <DialogTitle>
          <CloudLogo />
          <TitleText>Çağrı Ses Kayıtları</TitleText>
          <TitleGap />
          <WinButton aria-label="Küçült"><Ico w={8} h={8} box="0 0 8 8"><path d="M1.500 4.500H6.500" stroke="#9b978f" strokeWidth="1.500" /></Ico></WinButton>
          <WinButton aria-label="Büyüt"><Ico w={8} h={8} box="0 0 8 8"><path d="M4 1.500H6.500V4M1.500 4V6.500H4" stroke="#9b978f" fill="none" /></Ico></WinButton>
          <WinButton aria-label="Pencereyi kapat"><Ico w={8} h={8} box="0 0 8 8"><path d="M1.500 1.500L6.500 6.500M6.500 1.500L1.500 6.500" stroke="#8f8b84" strokeWidth="1.600" /></Ico></WinButton>
        </DialogTitle>
        <DialogBody>
          <DialogHead>
            <DialogInfo>{"05423266905 -> 15\n[16] 20140617-142226-1403004146.55.wav"}</DialogInfo>
            <Kapat><RedCross /><span><u>K</u>apat</span></Kapat>
          </DialogHead>
          <GroupBar>Drag a column header here to group by that column</GroupBar>
          <Grid $w={456}>
            <GridHead cols={recCols} />
            <tbody>
              {recordings.map(([date, dur, x], i) => (
                <Row key={date} $sel={i === 0}>
                  <Td>{date}</Td>
                  <Td>05423266905</Td>
                  <Td>15</Td>
                  <Td $a="right">{dur}</Td>
                  <Td $a="center">{x}</Td>
                </Row>
              ))}
            </tbody>
          </Grid>
          <Summary><SummaryBox>5 Adet</SummaryBox></Summary>
        </DialogBody>
      </Dialog>

      <Player role="dialog" aria-label="Ses Log">
        <PlayerTitle>
          Ses Log
          <PlayerClose aria-label="Kapat"><Ico w={8} h={8} box="0 0 8 8"><path d="M1 1L7 7M7 1L1 7" stroke="#77735c" strokeWidth="1.500" /></Ico></PlayerClose>
        </PlayerTitle>
        <Display>
          <Scope />
          <Track><span>20140617-142226-1403004146.55</span><span>00:06</span></Track>
        </Display>
        <Controls>
          <SeekRow>
            <IconButton $w={8} aria-label="Geri sar"><Ico w={8} h={6} box="0 0 8 6"><path d="M4 1V5L1 3ZM8 1V5L5 3Z" fill="#a9bdd8" /></Ico></IconButton>
            <Range type="range" aria-label="Konum" defaultValue={43} $w={246} $thumb={13} $pct={43} />
            <IconButton $w={8} aria-label="İleri sar"><Ico w={8} h={6} box="0 0 8 6"><path d="M0 1V5L3 3ZM4 1V5L7 3Z" fill="#1f63bd" stroke="#1f63bd" strokeWidth=".6" /></Ico></IconButton>
          </SeekRow>
          <ButtonRow>
            <IconButton $w={22} aria-label="Duraklat"><Ico w={21} h={21} box="0 0 21 21"><circle cx="10.500" cy="10.500" r="9.800" fill="url(#gb)" stroke="#98a0b8" /><path d="M7.800 6V15M13.200 6V15" stroke="#fff" strokeWidth="2.600" /></Ico></IconButton>
            <IconButton $w={20} aria-label="Durdur"><Ico w={8} h={8} box="0 0 8 8"><path d="M0 0H8V8H0Z" fill="#1a5bb5" /></Ico></IconButton>
            <IconButton $w={24} aria-label="Önceki"><Ico w={11} h={9} box="0 0 11 9"><path d="M0 0H2V9H0ZM10 0V9L3 4.500Z" fill="#9fb5d2" /></Ico></IconButton>
            <IconButton $w={22} aria-label="Sonraki"><Ico w={11} h={9} box="0 0 11 9"><path d="M9 0H11V9H9ZM1 0V9L8 4.500Z" fill="#9fb5d2" /></Ico></IconButton>
            <IconButton $w={22} aria-label="Ses"><Ico w={13} h={11} box="0 0 13 11"><path d="M0 3.500H2.500L6 0V11L2.500 7.500H0Z" fill="#1f63bd" /><path d="M7.500 3Q9.500 5.500 7.500 8M9 1Q13.500 5.500 9 10" stroke="#3c80d4" strokeWidth="1.400" fill="none" /></Ico></IconButton>
            <Cell $w={64}><Range type="range" aria-label="Ses düzeyi" defaultValue={50} $w={55} $thumb={8} $pct={50} /></Cell>
          </ButtonRow>
        </Controls>
        <PlayerFoot>
          <span>{"20140617-142226-1403004146.55.wav\n05423266905 -> 15"}</span>
          <button aria-label="Kaydet"><Floppy /></button>
        </PlayerFoot>
      </Player>
    </Screen>
  );
}
